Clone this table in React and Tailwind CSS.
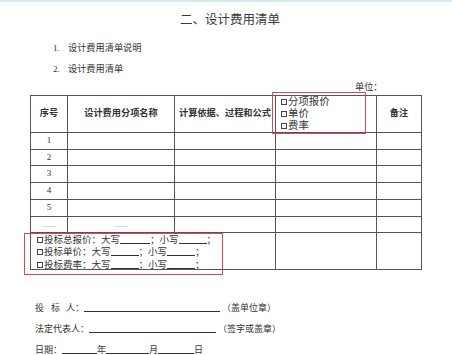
import React from "react";

const Box = () => (
  <span className="inline-block w-[6px] h-[6px] border border-[#444] mr-[1px] align-[0px]" />
);

const Blank = ({ w }) => (
  <span className="inline-block border-b border-[#333] h-[8px] relative top-[1px]" style={{ width: w }} />
);

const cell = "border-l border-t border-[#555]";
const rows = ["1", "2", "3", "4", "5"];

export default function App() {
  return (
    <div className="w-[452px] h-[355px] overflow-hidden bg-white text-[#333] font-['Liberation_Serif','Noto_Sans_CJK_SC',serif]">
      <div className="h-[2px] bg-[#d4e6f1]" />
      <div className="mt-[10px] pl-[8px] text-center text-[12.5px] leading-[16px] text-[#3a3a3a]">
        二、设计费用清单
      </div>
      <div className="mt-[13px] pl-[53px] text-[9.2px] leading-[14px] flex flex-col gap-[7px]">
        <div className="flex">
          <span className="w-[15px]">1.</span>
          <span>设计费用清单说明</span>
        </div>
        <div className="flex">
          <span className="w-[15px]">2.</span>
          <span>设计费用清单</span>
        </div>
      </div>
      <div className="mt-[5px] pl-[355px] text-[9.2px] leading-[12px]">单位：</div>

      <div className="mt-[2px] ml-[30px] relative w-[392px]">
        <div className="grid grid-cols-[37px_107px_101px_101px_45px] grid-rows-[37px_17px_16px_17px_17px_17px_16px_37px] border-r border-b border-[#555] text-[9.2px]">
          <div className={`${cell} flex items-center justify-center font-bold`}>序号</div>
          <div className={`${cell} flex items-center justify-center font-bold`}>设计费用分项名称</div>
          <div className={`${cell} flex items-center justify-center font-bold`}>计算依据、过程和公式</div>
          <div className={`${cell} flex flex-col justify-center pl-[5px] text-[10.4px] leading-[12px]`}>
            <div><Box />分项报价</div>
            <div><Box />单价</div>
            <div><Box />费率</div>
          </div>
          <div className={`${cell} flex items-center justify-center font-bold`}>备注</div>

          {rows.map((r) => (
            <React.Fragment key={r}>
              <div className={`${cell} flex items-center justify-center text-[9px] text-[#333]`}>{r}</div>
              <div className={cell} />
              <div className={cell} />
              <div className={cell} />
              <div className={cell} />
            </React.Fragment>
          ))}

          <div className={`${cell} flex items-end justify-center pb-[3px] text-[7px] leading-[8px] text-[#777]`}>……</div>
          <div className={`${cell} flex items-end justify-center pb-[3px] text-[7px] leading-[8px] text-[#777]`}>……</div>
          <div className={cell} />
          <div className={cell} />
          <div className={cell} />

          <div className={`${cell} col-span-3 pl-[6px] pt-[1px] text-[9.5px] leading-[12.3px]`}>
            <div className="whitespace-nowrap">
              <Box />投标总报价：大写<Blank w={30} />；小写<Blank w={28} />；
            </div>
            <div className="whitespace-nowrap">
              <Box />投标单价：大写<Blank w={28} />；小写<Blank w={28} />；
            </div>
            <div className="whitespace-nowrap">
              <Box />投标费率：大写<Blank w={28} />；小写<Blank w={28} />；
            </div>
          </div>
          <div className={cell} />
          <div className={cell} />
        </div>

        <div className="absolute left-[242px] top-[-3px] w-[94px] h-[42px] border-[1.5px] border-[#e0464e]" />
        <div className="absolute left-[-6px] top-[138px] w-[199px] h-[42px] border-[1.5px] border-[#e0464e]" />
      </div>

      <div className="mt-[31px] pl-[35px] text-[9px] leading-[14px] flex flex-col gap-[7px]">
        <div className="whitespace-nowrap">
          <span>投</span>
          <span className="ml-[7px]">标</span>
          <span className="ml-[6px]">人：</span>
          <Blank w={136} />
          <span className="ml-[2px]">（盖单位章）</span>
        </div>
        <div className="whitespace-nowrap">
          <span>法定代表人：</span>
          <Blank w={127} />
          <span className="ml-[2px]">（签字或盖章）</span>
        </div>
        <div className="whitespace-nowrap">
          <span>日期：</span>
          <Blank w={35} />
          <span>年</span>
          <Blank w={43} />
          <span>月</span>
          <Blank w={36} />
          <span>日</span>
        </div>
      </div>
    </div>
  );
}
